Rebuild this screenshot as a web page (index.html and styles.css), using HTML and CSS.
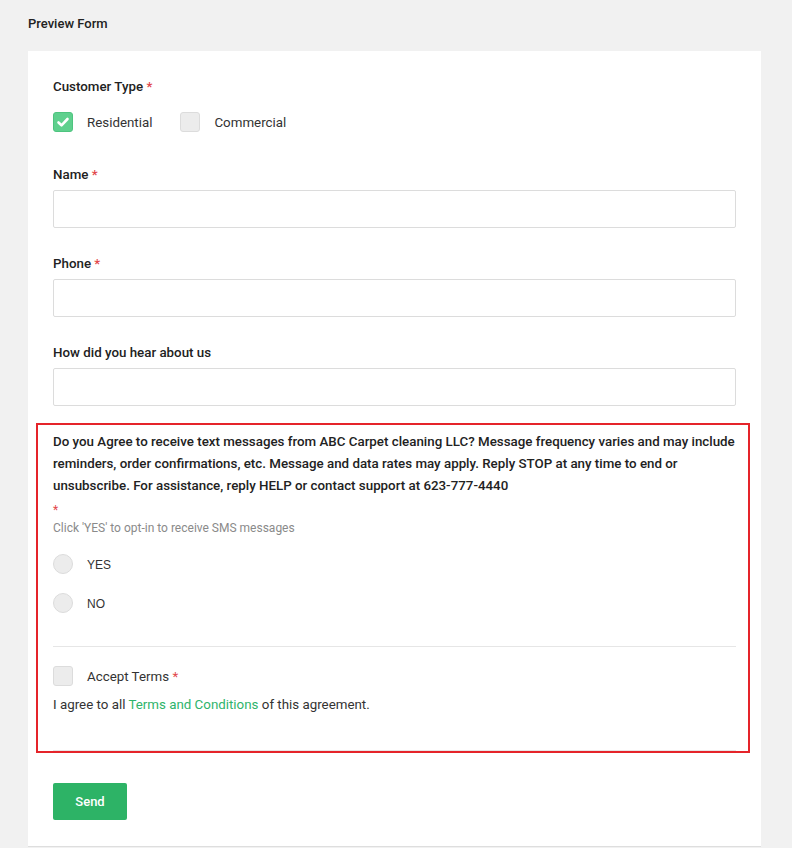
FILE: index.html
```html
<!DOCTYPE html>
<html>
<head>
<meta charset="utf-8">
<link rel="stylesheet" href="styles.css">
</head>
<body>
<div class="page-title">Preview Form</div>
<div class="card">
  <div class="field">
    <div class="label">Customer Type <span class="req">*</span></div>
    <div class="check-row">
      <label class="opt"><span class="box checked"><svg viewBox="0 0 20 20" width="20" height="20"><path d="M5.5 10.5 L8.5 13.3 L14.5 7" fill="none" stroke="#fff" stroke-width="2.6" stroke-linecap="round" stroke-linejoin="round"/></svg></span><span class="opt-text">Residential</span></label>
      <label class="opt"><span class="box"></span><span class="opt-text">Commercial</span></label>
    </div>
  </div>
  <div class="field group">
    <div class="label">Name <span class="req">*</span></div>
    <div class="input"></div>
  </div>
  <div class="field group">
    <div class="label">Phone <span class="req">*</span></div>
    <div class="input"></div>
  </div>
  <div class="field group last">
    <div class="label">How did you hear about us</div>
    <div class="input"></div>
  </div>
  <div class="sms-box">
    <p class="sms-text">Do you Agree to receive text messages from ABC Carpet cleaning LLC? Message frequency varies and may include reminders, order confirmations, etc. Message and data rates may apply. Reply STOP at any time to end or unsubscribe. For assistance, reply HELP or contact support at 623-777-4440</p>
    <div class="req small-req">*</div>
    <div class="hint">Click 'YES' to opt-in to receive SMS messages</div>
    <div class="radios">
      <label class="opt"><span class="radio"></span><span class="opt-text arial">YES</span></label>
      <label class="opt"><span class="radio"></span><span class="opt-text arial">NO</span></label>
    </div>
    <div class="terms">
      <label class="opt"><span class="box"></span><span class="opt-text">Accept Terms <span class="req">*</span></span></label>
      <p class="agree">I agree to all <a class="link">Terms and Conditions</a> of this agreement.</p>
    </div>
  </div>
  <button class="send">Send</button>
</div>
</body>
</html>
```
FILE: styles.css
```css
html, body {
  margin: 0;
  padding: 0;
  background: #f1f1f1;
  font-family: Roboto, "Liberation Sans", sans-serif;
  color: #333;
}
.page-title {
  padding: 15px 28px 18px;
  font-size: 13px;
  line-height: 18px;
  font-weight: 500;
  color: #222;
}
.card {
  background: #fff;
  margin: 0 31px 0 28px;
  padding: 27px 25px 26px;
  border-bottom: 1px solid #dedede;
}
.label {
  font-size: 13.33px;
  line-height: 18px;
  font-weight: 500;
  color: #222;
}
.req {
  color: #e2474b;
}
.check-row {
  display: flex;
  gap: 28px;
  margin-top: 16px;
}
.opt {
  display: flex;
  align-items: center;
  height: 20px;
  font-size: 13.33px;
  color: #333;
}
.opt-text {
  margin-left: 14px;
}
.arial {
  font-family: "Liberation Sans", Arial, sans-serif;
  font-size: 12px;
  padding-top: 2px;
}
.box {
  width: 18px;
  height: 18px;
  border: 1px solid #dcdcdc;
  background: #ececec;
  border-radius: 3px;
  display: inline-block;
}
.box.checked {
  background: #5fd08e;
  border-color: #4ec47f;
  position: relative;
}
.box.checked svg {
  position: absolute;
  left: -1px;
  top: -1px;
}
.field.group {
  margin-top: 34px;
}
.field.group + .field.group {
  margin-top: 27px;
}
.label + .input {
  margin-top: 6px;
}
.input {
  height: 36px;
  border: 1px solid #dcdcdc;
  border-radius: 2px;
  background: #fff;
}
.sms-box {
  margin: 17px -14px 0 -17px;
  border: 2px solid #e5242a;
  padding: 6px 12px 0 15px;
}
.sms-text {
  margin: 0;
  font-size: 13.33px;
  line-height: 22px;
  font-weight: 500;
  color: #222;
}
.small-req {
  font-size: 12px;
  line-height: 16px;
  margin-top: 5px;
}
.hint {
  font-size: 12px;
  line-height: 18px;
  color: #8a8a8a;
  margin-top: 1px;
}
.radios {
  margin-top: 17px;
  display: flex;
  flex-direction: column;
  gap: 19px;
  padding-bottom: 33px;
  border-bottom: 1px solid #e6e6e6;
}
.radio {
  width: 18px;
  height: 18px;
  border: 1px solid #dcdcdc;
  background: #ececec;
  border-radius: 50%;
  display: inline-block;
}
.terms {
  padding-top: 19px;
  padding-bottom: 35px;
  border-bottom: 1px solid #e6e6e6;
}
.agree {
  margin: 9px 0 0;
  font-size: 13.33px;
  line-height: 20px;
  color: #333;
}
.link {
  color: #2eb46b;
  text-decoration: none;
}
.send {
  margin-top: 30px;
  display: block;
  width: 74px;
  height: 37px;
  border: none;
  border-radius: 2px;
  background: #2db366;
  color: #fff;
  font-family: Roboto, "Liberation Sans", sans-serif;
  font-size: 13px;
  font-weight: 500;
  padding: 0;
}
```
